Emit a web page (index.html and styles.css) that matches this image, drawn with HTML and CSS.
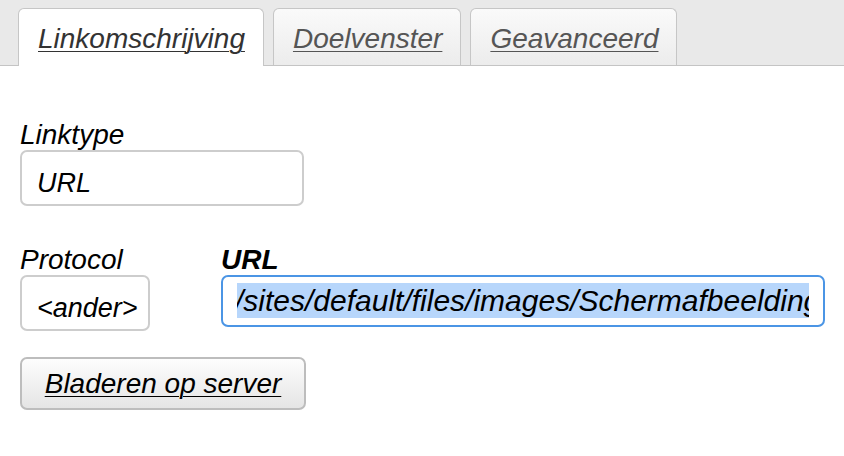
FILE: index.html
```html
<!DOCTYPE html>
<html lang="nl">
<head>
<meta charset="utf-8">
<title>Link</title>
<link rel="stylesheet" href="styles.css">
</head>
<body>
<div class="tabbar">
  <div class="tab active"><span class="tablabel">Linkomschrijving</span></div>
  <div class="tab"><span class="tablabel">Doelvenster</span></div>
  <div class="tab"><span class="tablabel">Geavanceerd</span></div>
</div>
<div class="content">
  <div class="field">
    <div class="label">Linktype</div>
    <div class="select select-type">URL</div>
  </div>
  <div class="row">
    <div class="field">
      <div class="label">Protocol</div>
      <div class="select select-proto">&lt;ander&gt;</div>
    </div>
    <div class="field field-url">
      <div class="label bold">URL</div>
      <div class="input focused"><span class="sel">/sites/default/files/images/Schermafbeelding</span></div>
    </div>
  </div>
  <div class="button"><span class="btnlabel">Bladeren op server</span></div>
</div>
</body>
</html>
```
FILE: styles.css
```css
html, body {
  margin: 0;
  padding: 0;
  background: #ffffff;
}
body {
  font-family: "Liberation Sans", Arial, sans-serif;
  font-style: italic;
  color: #000;
  width: 844px;
  height: 456px;
  overflow: hidden;
}
.tabbar {
  box-sizing: border-box;
  height: 66px;
  background: #e9e9e9;
  border-bottom: 1px solid #c4c4c4;
  padding: 8px 0 0 18px;
  display: flex;
  align-items: flex-start;
  gap: 9px;
}
.tab {
  box-sizing: border-box;
  height: 57px;
  padding: 0 18px 0 19px;
  border: 1px solid #c6c6c6;
  border-bottom: none;
  border-radius: 6px 6px 0 0;
  background: linear-gradient(#fafafa, #ececec);
  font-size: 28px;
  line-height: 57px;
  color: #555;
}
.tab.active {
  height: 58px;
  background: #ffffff;
  color: #333;
}
.tablabel {
  text-decoration: underline;
  text-decoration-thickness: 1px;
  text-underline-offset: 3px;
  display: inline-block;
  line-height: 57px;
  position: relative;
  top: 1px;
}
.content {
  padding: 53px 20px 0 20px;
}
.label {
  font-size: 28px;
  line-height: 31px;
}
.bold {
  font-weight: bold;
}
.select {
  box-sizing: border-box;
  border: 2px solid #cdcdcd;
  border-radius: 7px;
  background: #fff;
  font-size: 27px;
  padding: 0 15px;
  display: flex;
  align-items: flex-end;
}
.select-type {
  width: 284px;
  height: 56px;
  padding-bottom: 5px;
}
.select-proto {
  width: 130px;
  height: 56px;
  padding-bottom: 5px;
  padding-left: 15px;
}
.row {
  display: flex;
  gap: 71px;
  margin-top: 38px;
}
.field-url {
  flex: 0 0 603px;
}
.input {
  box-sizing: border-box;
  height: 52px;
  border: 2px solid #4b95e5;
  border-radius: 7px;
  padding: 6px 14px 0 14px;
  overflow: hidden;
  white-space: nowrap;
  font-size: 30px;
}
.sel {
  display: inline-block;
  background: #b7d6fb;
  line-height: 35px;
  height: 35px;
  width: 572px;
  overflow: hidden;
  text-indent: -2px;
}
.button {
  box-sizing: border-box;
  margin-top: 26px;
  width: 286px;
  height: 53px;
  border: 2px solid #bdbdbd;
  border-radius: 7px;
  background: linear-gradient(#fdfdfd, #e5e5e5);
  font-size: 28px;
  display: flex;
  align-items: center;
  justify-content: center;
}
.btnlabel {
  text-decoration: underline;
  text-decoration-thickness: 1px;
  text-underline-offset: 3px;
}
```
